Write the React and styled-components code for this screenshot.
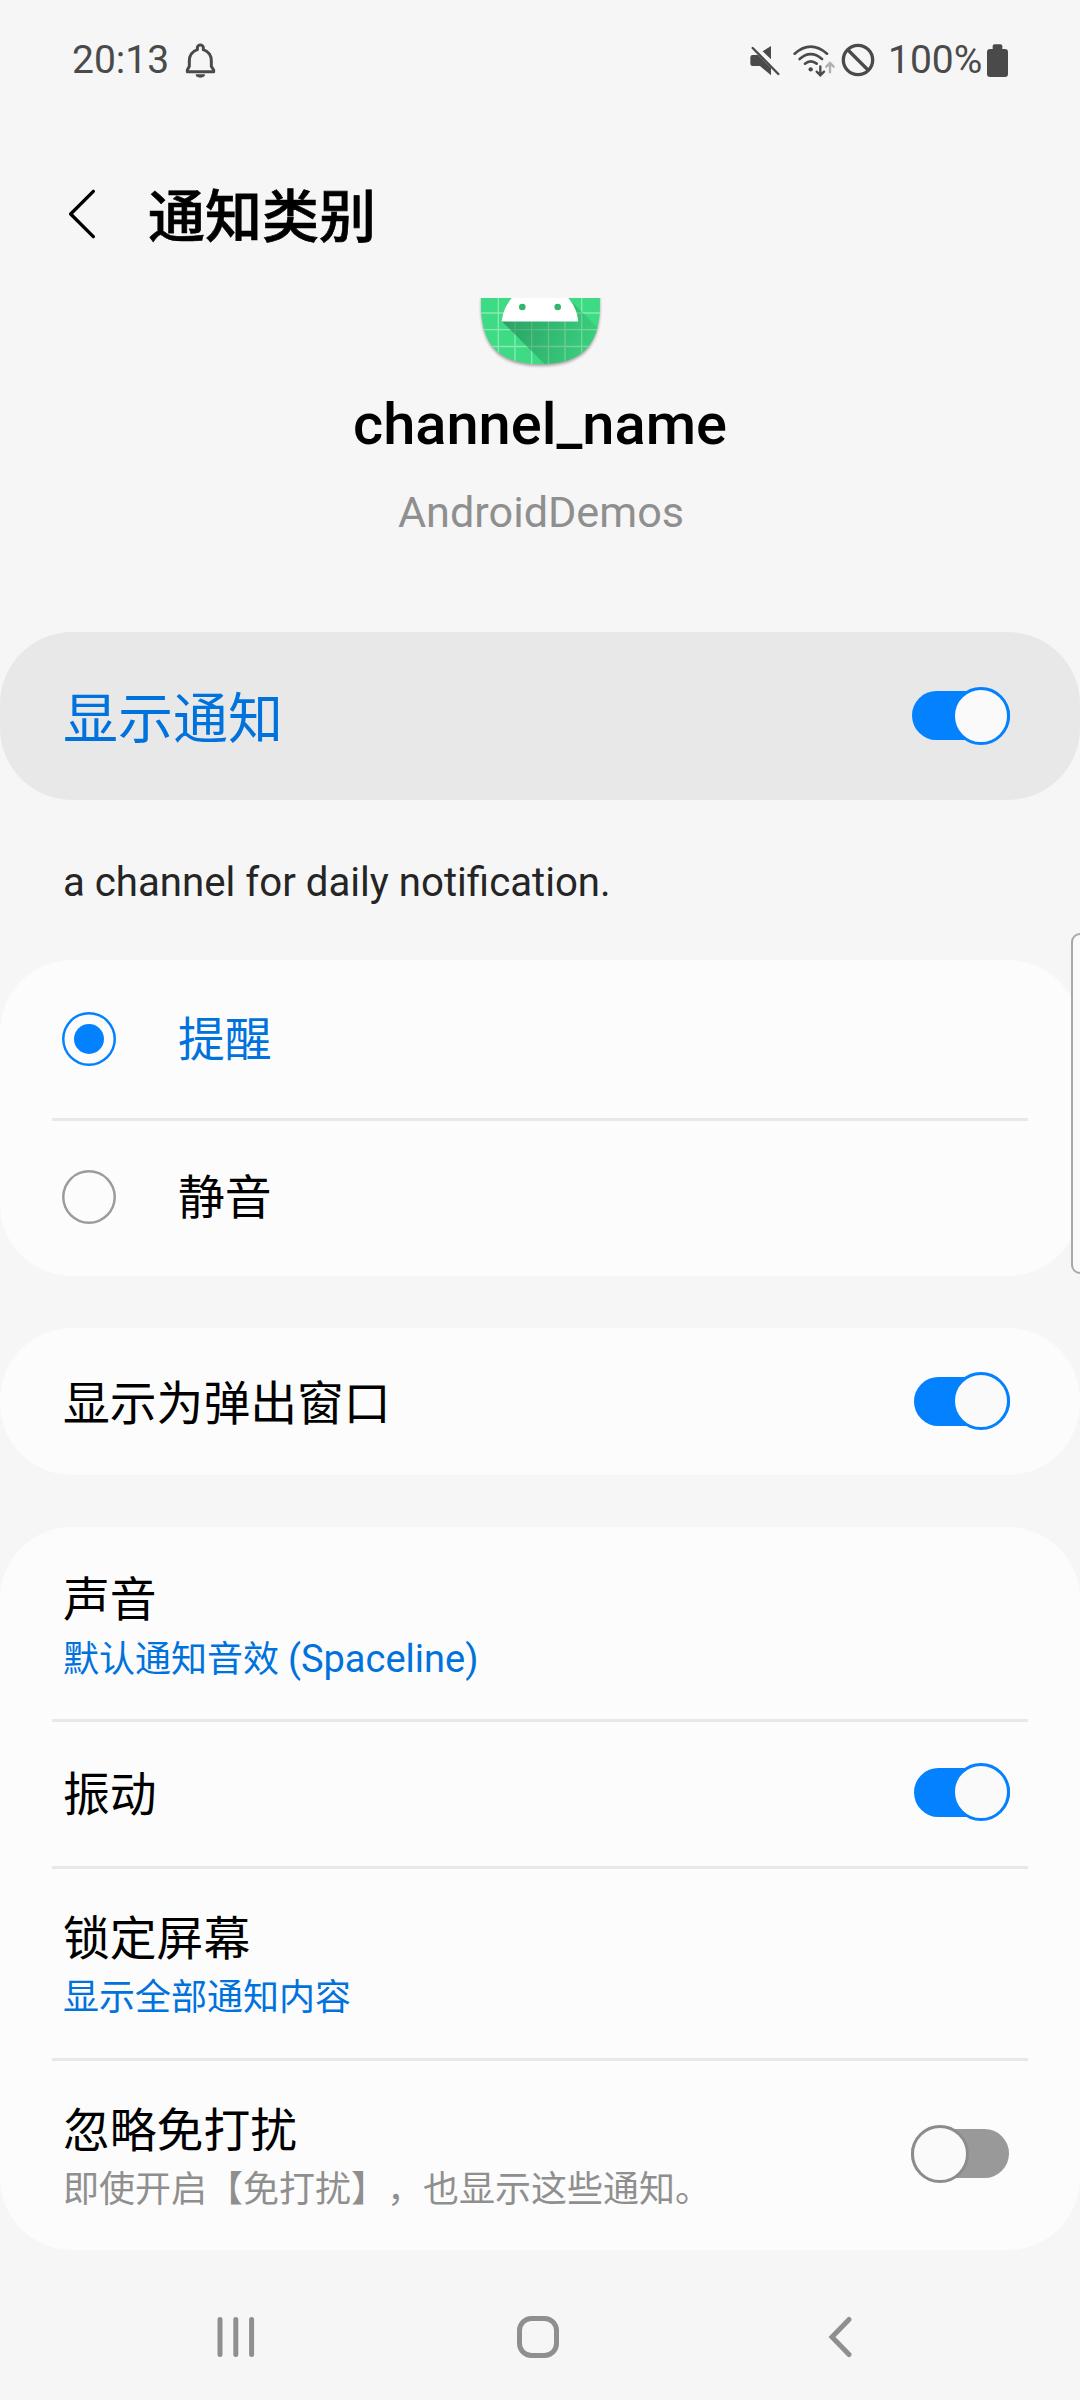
import React, { useState } from "react";
import styled, { createGlobalStyle } from "styled-components";

const GlobalStyle = createGlobalStyle`
  *, *::before, *::after { box-sizing: border-box; }
  body { margin: 0; background: #f6f6f6; }
`;

const BLUE = "#0381fe";
const BLUE_TEXT = "#0072de";
const GREY = "#8f8f8f";

const Screen = styled.div`
  width: 1080px;
  height: 2400px;
  display: flex;
  flex-direction: column;
  background: #f6f6f6;
  color: #000;
  font-family: Roboto, "Noto Sans CJK SC", sans-serif;
  text-spacing-trim: space-all;
  overflow: hidden;
`;

const StatusBar = styled.header`
  flex: none;
  height: 120px;
  padding: 0 72px;
  display: flex;
  align-items: center;
  justify-content: space-between;
  color: #4a4a4a;
  font-size: 39px;
  line-height: 46px;
`;

const StatusGroup = styled.div`
  display: flex;
  align-items: center;
`;

const Clock = styled.span`
  width: 113px;
`;

const Percent = styled.span`
  width: 99px;
  margin-left: 13px;
`;

const Icon = styled.svg`
  display: block;
  flex: none;
  margin-left: ${(p) => p.$left || 0}px;
  margin-right: ${(p) => p.$right || 0}px;
`;

const TitleBar = styled.div`
  flex: none;
  height: 178px;
  padding: 10px 0 0 68px;
  display: flex;
  align-items: center;
`;

const Title = styled.h1`
  margin: 0 0 5px 50px;
  font-family: "Noto Sans CJK SC Medium", "Noto Sans CJK SC", sans-serif;
  font-size: 57px;
  line-height: 84px;
  font-weight: 500;
  -webkit-text-stroke: 0.7px #000;
`;

const Content = styled.main`
  flex: none;
  height: 1952px;
  display: flex;
  flex-direction: column;
  position: relative;
`;

const Hero = styled.section`
  height: 334px;
  display: flex;
  flex-direction: column;
  align-items: center;
`;

const ChannelName = styled.h2`
  margin: 16px 0 0;
  font-size: 57.8px;
  line-height: 68px;
  font-weight: 500;
`;

const AppName = styled.p`
  margin: 29px 0 0;
  padding-left: 2px;
  font-size: 43.2px;
  line-height: 52px;
  color: ${GREY};
`;

const Description = styled.p`
  margin: 0;
  height: 160px;
  padding: 57px 63px 0;
  font-size: 40.2px;
  line-height: 52px;
  color: #252525;
`;

const Card = styled.section`
  flex: none;
  border-radius: 72px;
  background: ${(p) => (p.$main ? "#e8e8e8" : "#fcfcfc")};
  margin-bottom: ${(p) => p.$gap || 0}px;
`;

const Row = styled.div`
  height: ${(p) => p.$h}px;
  padding: 0 70px 0 63px;
  display: flex;
  align-items: center;
`;

const Divider = styled.hr`
  margin: 0 52px -3px;
  height: 3px;
  border: 0;
  background: #e8e8e8;
`;

const Labels = styled.div`
  flex: 1;
  display: flex;
  flex-direction: column;
  padding-top: ${(p) => p.$drop || 0}px;
`;

const Label = styled.span`
  font-size: ${(p) => (p.$big ? 55 : 46.8)}px;
  line-height: ${(p) => (p.$big ? 80 : 64)}px;
  color: ${(p) => (p.$active ? BLUE_TEXT : "#000")};
`;

const Summary = styled.span`
  font-size: 36px;
  line-height: 54px;
  color: ${(p) => (p.$muted ? GREY : BLUE_TEXT)};
`;

const Latin = styled.span`
  font-size: 38px;
`;

const RadioRing = styled.span`
  width: 54px;
  height: 54px;
  margin: 0 62px 0 -1px;
  border-radius: 50%;
  box-shadow: inset 0 0 0 2.5px ${(p) => (p.$on ? BLUE : "#9b9b9b")};
  display: grid;
  place-items: center;
`;

const RadioDot = styled.span`
  width: 30px;
  height: 30px;
  border-radius: 50%;
  background: ${BLUE};
`;

const Track = styled.button`
  flex: none;
  width: ${(p) => p.$w}px;
  height: 49px;
  margin: 0 ${(p) => (p.$on ? 0 : 1)}px 1px 0;
  padding: 0;
  border: 0;
  border-radius: 25px;
  background: ${(p) => (p.$on ? BLUE : "#999")};
  display: flex;
  align-items: center;
  justify-content: ${(p) => (p.$on ? "flex-end" : "flex-start")};
`;

const Thumb = styled.span`
  flex: none;
  width: 58px;
  height: 58px;
  border-radius: 50%;
  border: 3px solid ${(p) => (p.$on ? BLUE : "#8c8c8c")};
  background: #fafafa;
`;

const ScrollHandle = styled.div`
  position: absolute;
  top: 635px;
  right: -9px;
  width: 18px;
  height: 341px;
  border: 2px solid #a9a9a9;
  border-radius: 9px;
  background: #fafafa;
`;

const NavBar = styled.nav`
  flex: none;
  height: 150px;
  padding: 24px 227px 0 217px;
  display: flex;
  align-items: center;
  justify-content: space-between;
`;

function Switch({ initial, width = 96 }) {
  const [on, setOn] = useState(initial);
  return (
    <Track type="button" role="switch" aria-checked={on} $on={on} $w={width} onClick={() => setOn(!on)}>
      <Thumb $on={on} />
    </Track>
  );
}

function Radio({ on }) {
  return <RadioRing $on={on}>{on && <RadioDot />}</RadioRing>;
}

function BellIcon() {
  return (
    <Icon width="31" height="37" viewBox="435 65 93 111" fill="none" stroke="#4a4a4a" strokeWidth="9" strokeLinejoin="round">
      <path d="M442 154V149L448 138V122C448 104 458 93 472 88V82A9 8 0 0 1 490 82V88C504 93 514 104 514 122V138L521 149V154Z" />
      <path d="M467 162H495A14 10 0 0 1 467 162Z" fill="#4a4a4a" stroke="none" />
    </Icon>
  );
}

function MuteIcon() {
  return (
    <Icon width="30" height="32" viewBox="90 71 90 96" fill="#4a4a4a">
      <path d="M153 77V117L128 93ZM98 104H114L153 143V165L120 137H98Q91 137 91 130V111Q91 104 98 104Z" />
      <path d="M98 83L175 161" stroke="#4a4a4a" strokeWidth="7" strokeLinecap="round" />
    </Icon>
  );
}

function WifiIcon() {
  return (
    <Icon $left={12} width="43" height="34" viewBox="216 68 129 102" fill="none" stroke="#4a4a4a" strokeWidth="8" strokeLinecap="round">
      <path d="M224 100Q272 58 321 100M239 116Q272 87 306 116M255 130Q272 116 290 130" />
      <circle cx="272" cy="147" r="6.5" fill="#4a4a4a" stroke="none" />
      <path d="M301 138V163M290 154L301 165L312 154" strokeWidth="7" />
      <path d="M330 156V129M319 139L330 128L341 139" stroke="#b0b0b0" strokeWidth="7" />
    </Icon>
  );
}

function BlockIcon() {
  return (
    <Icon $left={6} width="34" height="34" viewBox="363 67 102 102" fill="none" stroke="#4a4a4a" strokeWidth="10">
      <circle cx="414" cy="118" r="44" />
      <path d="M384 88L444 148" />
    </Icon>
  );
}

function BatteryIcon() {
  return (
    <Icon width="21" height="33" viewBox="801 71 63 99" fill="#4a4a4a">
      <rect x="801" y="86" width="63" height="84" rx="9" />
      <rect x="818" y="72" width="29" height="30" rx="6" />
    </Icon>
  );
}

function AppIcon() {
  const body =
    "M540.5 245C582 245 600 263 600 304.5C600 345 582 364 540.5 364C499 364 481 345 481 304.5C481 263 499 245 540.5 245Z";
  return (
    <Icon width="140" height="76" viewBox="470 298 140 76">
      <defs>
        <clipPath id="body">
          <path d={body} />
        </clipPath>
        <linearGradient id="shade" gradientUnits="userSpaceOnUse" x1="505" y1="318" x2="590" y2="355">
          <stop offset="0" stopColor="#1f7a4d" stopOpacity="0.6" />
          <stop offset="1" stopColor="#1f7a4d" stopOpacity="0.12" />
        </linearGradient>
        <filter id="soft" x="-20%" y="-20%" width="140%" height="140%">
          <feGaussianBlur stdDeviation="1.5" />
        </filter>
      </defs>
      <path d={body} fill="#000" opacity="0.35" transform="translate(0 2)" filter="url(#soft)" />
      <path d={body} fill="#3ddc84" />
      <g clipPath="url(#body)">
        <path
          d="M498.3 290V370M515 290V370M531.7 290V370M548.5 290V370M565 290V370M581.7 290V370M475 313H606M475 329.7H606M475 346.5H606"
          stroke="#fff"
          strokeOpacity="0.4"
          strokeWidth="1.3"
        />
        <path d="M501.7 321.3L550 369.6H620V350L570 300Z" fill="url(#shade)" />
      </g>
      <path d="M501.7 321.5C503 310 507.5 302.5 513.5 296H566.5C572.5 302.5 577 310 578.3 321.5Z" fill="#fff" />
      <circle cx="522.3" cy="307" r="3.3" fill="#33b56f" />
      <circle cx="557.7" cy="307" r="3.3" fill="#33b56f" />
    </Icon>
  );
}

export default function App() {
  return (
    <Screen lang="zh-CN">
      <GlobalStyle />
      <StatusBar>
        <StatusGroup>
          <Clock>20:13</Clock>
          <BellIcon />
        </StatusGroup>
        <StatusGroup>
          <MuteIcon />
          <WifiIcon />
          <BlockIcon />
          <Percent>100%</Percent>
          <BatteryIcon />
        </StatusGroup>
      </StatusBar>
      <TitleBar>
        <Icon width="30" height="50" viewBox="84 508 90 150" fill="none" stroke="#000" strokeWidth="10" strokeLinecap="round" strokeLinejoin="round">
          <path d="M160 515L92 583L160 651" />
        </Icon>
        <Title>通知类别</Title>
      </TitleBar>
      <Content>
        <Hero>
          <AppIcon />
          <ChannelName>channel_name</ChannelName>
          <AppName>AndroidDemos</AppName>
        </Hero>
        <Card $main>
          <Row $h={168}>
            <Labels $drop={6}>
              <Label $big $active>显示通知</Label>
            </Labels>
            <Switch initial width={98} />
          </Row>
        </Card>
        <Description>a channel for daily notification.</Description>
        <Card $gap={52}>
          <Row $h={158}>
            <Radio on />
            <Labels $drop={2}>
              <Label $active>提醒</Label>
            </Labels>
          </Row>
          <Divider />
          <Row $h={158}>
            <Radio />
            <Labels $drop={2}>
              <Label>静音</Label>
            </Labels>
          </Row>
        </Card>
        <Card $gap={52}>
          <Row $h={147}>
            <Labels $drop={4}>
              <Label>显示为弹出窗口</Label>
            </Labels>
            <Switch initial />
          </Row>
        </Card>
        <Card>
          <Row $h={192}>
            <Labels $drop={8}>
              <Label>声音</Label>
              <Summary>
                默认通知音效 <Latin>(Spaceline)</Latin>
              </Summary>
            </Labels>
          </Row>
          <Divider />
          <Row $h={147}>
            <Labels $drop={4}>
              <Label>振动</Label>
            </Labels>
            <Switch initial />
          </Row>
          <Divider />
          <Row $h={192}>
            <Labels $drop={8}>
              <Label>锁定屏幕</Label>
              <Summary>显示全部通知内容</Summary>
            </Labels>
          </Row>
          <Divider />
          <Row $h={192}>
            <Labels $drop={8}>
              <Label>忽略免打扰</Label>
              <Summary $muted>即使开启【免打扰】，也显示这些通知。</Summary>
            </Labels>
            <Switch initial={false} width={98} />
          </Row>
        </Card>
        <ScrollHandle />
      </Content>
      <NavBar>
        <Icon width="38" height="42" viewBox="0 0 38 42" stroke={GREY} strokeWidth="5" strokeLinecap="round">
          <path d="M3 3.5V38.5M18.8 3.5V38.5M34.6 3.5V38.5" />
        </Icon>
        <Icon $right={7} width="44" height="44" viewBox="0 0 44 44" fill="none" stroke={GREY} strokeWidth="5">
          <rect x="3.5" y="3.5" width="37" height="37" rx="12" />
        </Icon>
        <Icon width="26" height="42" viewBox="0 0 26 42" fill="none" stroke={GREY} strokeWidth="5" strokeLinecap="round">
          <path d="M22 3.5L5 21L22 38.5" />
        </Icon>
      </NavBar>
    </Screen>
  );
}
